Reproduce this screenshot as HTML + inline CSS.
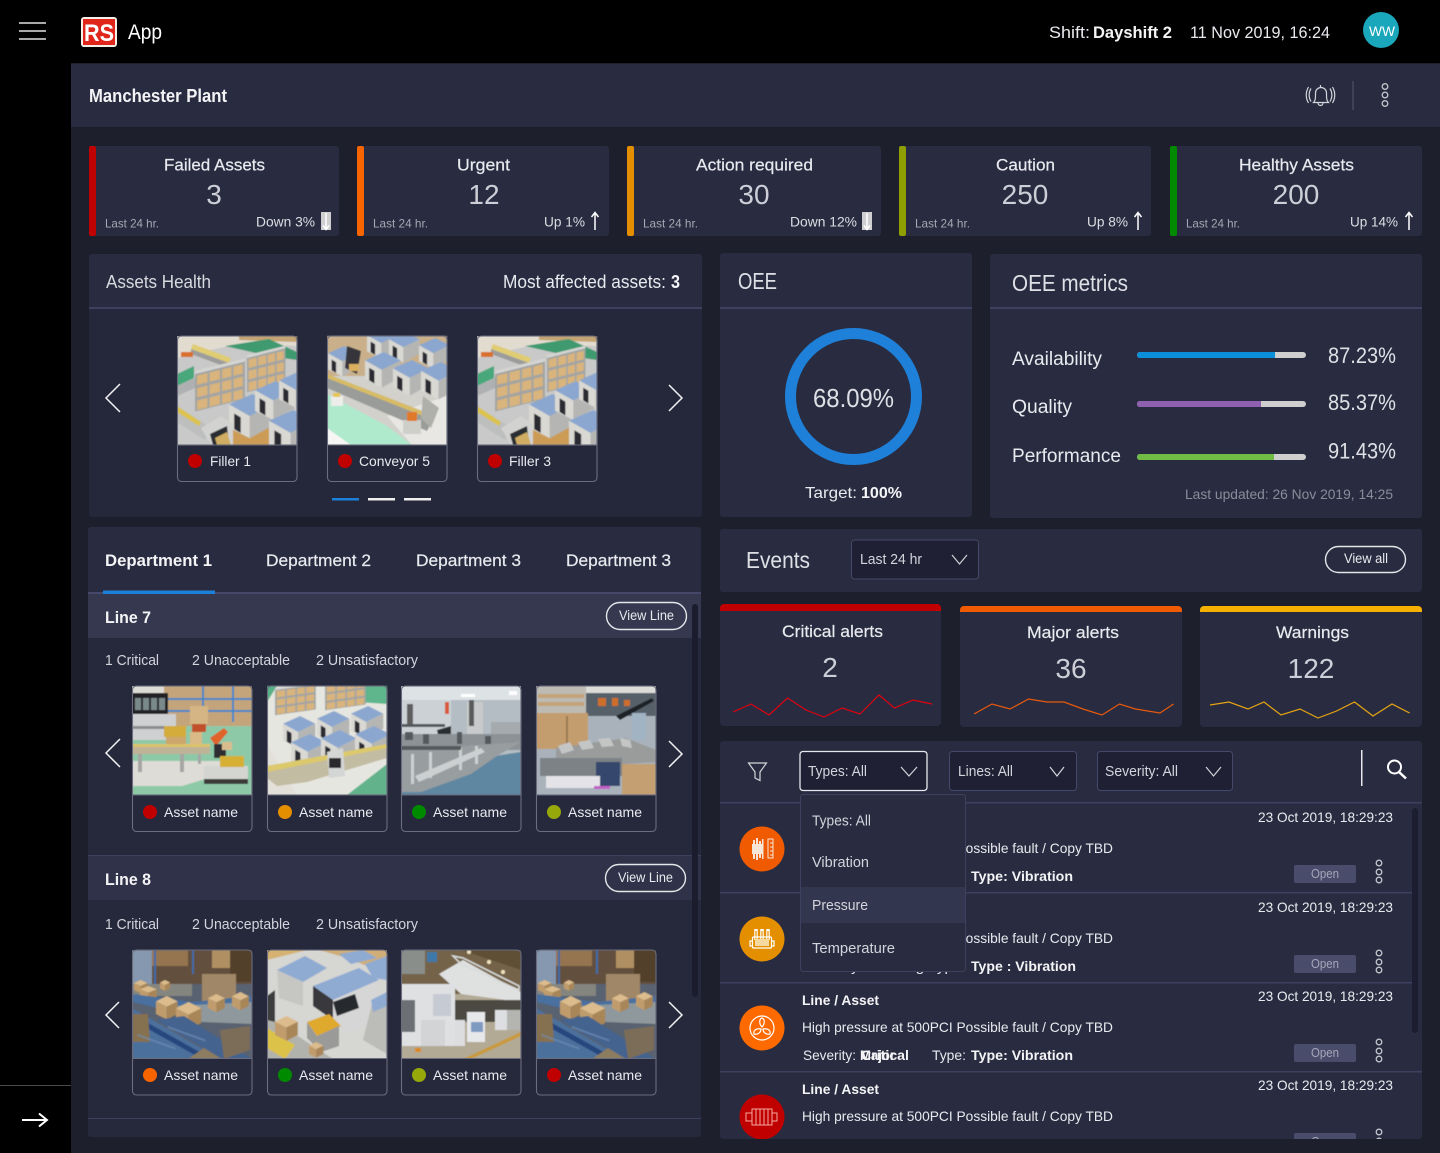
<!DOCTYPE html>
<html lang="en"><head><meta charset="utf-8"><title>Manchester Plant</title>
<style>
html,body{margin:0;padding:0;background:#000;width:1440px;height:1153px;overflow:hidden}
svg.p{display:block;position:absolute;left:0;top:0}
text{font-family:"Liberation Sans",sans-serif;fill:#e9eaef}
.b{font-weight:700;fill:#f4f4f6}
.n{font-size:28px;text-anchor:middle;fill:#cdced7}
.t{font-size:17px;stroke:#e9eaef;stroke-width:.2px}.s{font-size:14px}.m{font-size:14.5px;fill:#d3d4dc}
.l{font-size:12px;fill:#a5a7b2}.h{font-size:23px;fill:#dfe0e6}.a{font-size:14px;fill:#dcdde3}
.cb{fill:none;stroke:#6b6d7e;stroke-width:1.1}
.ch{fill:none;stroke:#f2f2f2;stroke-width:1.5}
.v{fill:none;stroke:#d4d5da;stroke-width:1.2}
.dv{fill:none;stroke:#c4c5cc;stroke-width:1.3}
.ln{fill:#3e4060}.c{fill:#292c40}
.ic{fill:none;stroke:#fff;stroke-width:1.2}
.i{filter:url(#sf)}
</style></head><body>
<svg class="p" width="1440" height="1153" viewBox="0 0 1440 1153" xmlns="http://www.w3.org/2000/svg">
<defs>
<filter id="sf" x="0" y="0" width="100%" height="100%"><feGaussianBlur stdDeviation=".45"/></filter>
<g id="mc"><polygon points="0,8 18,0 34,8 16,17" fill="#8ba7cf"/><polygon points="0,8 16,17 16,34 0,26" fill="#d9d8d3"/><polygon points="16,17 34,8 34,24 16,34" fill="#b5b6b4"/><polygon points="4,15 9,18 9,30 4,27" fill="#2c2c30"/></g>
<g id="sh"><rect width="48" height="36" fill="#a3a4a3"/><g fill="#d9b47c"><rect x="2" y="2" width="10" height="9"/><rect x="14" y="2" width="10" height="9"/><rect x="26" y="2" width="9" height="9"/><rect x="37" y="2" width="9" height="9"/><rect x="2" y="14" width="10" height="9"/><rect x="14" y="14" width="10" height="9"/><rect x="26" y="14" width="9" height="9"/><rect x="37" y="14" width="9" height="9"/><rect x="2" y="26" width="10" height="9"/><rect x="14" y="26" width="10" height="9"/><rect x="26" y="26" width="9" height="9"/><rect x="37" y="26" width="9" height="9"/></g><rect y="-3" width="48" height="3" fill="#d4d4d2"/></g>
<g id="bx"><polygon points="0,6 12,0 24,6 12,12" fill="#dcbc8c"/><polygon points="0,6 12,12 12,26 0,20" fill="#c09c6c"/><polygon points="12,12 24,6 24,20 12,26" fill="#a88658"/></g>
<symbol id="A" viewBox="0 0 120 109"><rect width="120" height="109" fill="#c8c9c8"/><polygon points="0,0 120,0 120,10 60,8 0,22" fill="#e2dcd0"/><polygon points="62,0 120,0 120,6 62,4" fill="#c5a473"/><polygon points="48,10 92,3 120,16 120,24 92,20" fill="#3f9a70"/><polygon points="16,8 54,22 52,27 14,13" fill="#e0cc72"/><polygon points="14,13 52,27 52,32 14,18" fill="#9c9d9b"/><rect x="4" y="16" width="12" height="5" fill="#d8702e"/><polygon points="0,38 17,30 17,42 0,50" fill="#4aa77c"/><polygon points="0,50 18,42 18,52 0,60" fill="#aeb0b2"/><g transform="translate(18,38) skewY(-14) scale(1.04)"><use href="#sh"/></g><g transform="translate(70,22) skewY(-14) scale(.8,.95)"><use href="#sh"/></g><polygon points="40,92 72,76 112,102 100,109 56,109" fill="#cc9b55"/><g transform="translate(52,58) scale(1.3)"><use href="#mc"/></g><g transform="translate(78,45) scale(1.15)"><use href="#mc"/></g><g transform="translate(102,36) scale(1.05)"><use href="#mc"/></g><g transform="translate(92,74) scale(1.35)"><use href="#mc"/></g><polygon points="0,70 34,92 28,104 0,86" fill="#bdbebe"/><polygon points="0,70 24,86 22,90 0,76" fill="#dcc34e"/><polygon points="24,92 44,80 56,88 56,109 34,109" fill="#d2d2d0"/><polygon points="33,98 50,90 52,109 36,109" fill="#2c2d30"/><polygon points="38,102 50,96 54,109 40,109" fill="#d0ad64"/></symbol>
<symbol id="B" viewBox="0 0 120 109"><rect width="120" height="109" fill="#d2d1cc"/><rect width="120" height="40" fill="#c9b08a"/><polygon points="0,58 60,90 85,109 20,109 0,95" fill="#aeeacb"/><polygon points="0,92 24,109 0,109" fill="#f6f6f4"/><polygon points="60,80 120,60 120,109 85,109" fill="#e8e7e3"/><g transform="translate(1,10) scale(.9)"><use href="#mc"/></g><g transform="translate(40,-8) scale(.9)"><use href="#mc"/></g><g transform="translate(62,-4) scale(.9)"><use href="#mc"/></g><g transform="translate(92,2) scale(.9)"><use href="#mc"/></g><g transform="translate(38,16) scale(1.05)"><use href="#mc"/></g><g transform="translate(66,24) scale(1.05)"><use href="#mc"/></g><g transform="translate(94,26) scale(1.1)"><use href="#mc"/></g><polygon points="20,10 34,15 30,38 18,32" fill="#35353a"/><rect x="22" y="28" width="10" height="7" fill="#d9b060"/><polygon points="0,38 108,80 100,95 0,52" fill="#9a9c99"/><polygon points="0,38 108,80 106,84 0,42" fill="#d8bc65"/><polygon points="96,60 112,72 104,92 94,82" fill="#b0b0ab"/><rect x="76" y="84" width="18" height="14" fill="#cfcfca"/><rect x="80" y="76" width="10" height="9" fill="#e07a2a"/><rect x="4" y="60" width="12" height="10" fill="#ededeb"/><rect x="6" y="57" width="7" height="4" fill="#e6c652"/></symbol>
<symbol id="C" viewBox="0 0 120 109"><rect width="120" height="109" fill="#8ec9a7"/><rect width="120" height="16" fill="#dedcd6"/><rect x="32" width="88" height="40" fill="#c4a47a"/><g fill="#3f86c8"><rect x="32" y="12" width="88" height="2"/><rect x="32" y="24" width="88" height="2"/><rect x="70" width="2" height="34"/><rect x="100" width="2" height="36"/></g><polygon points="0,75 90,75 90,88 50,100 0,100" fill="#dedcd6"/><rect x="0" y="7" width="36" height="21" fill="#222327"/><g fill="#7a8a8a"><rect x="3" y="12" width="6" height="12"/><rect x="11" y="12" width="6" height="12"/><rect x="19" y="12" width="6" height="12"/><rect x="27" y="12" width="6" height="12"/></g><rect x="0" y="28" width="44" height="26" fill="#cfd0d2"/><rect x="0" y="40" width="44" height="3" fill="#8c8c8c"/><rect x="34" y="42" width="20" height="16" fill="#cca66c"/><rect x="32" y="40" width="22" height="11" fill="#d4ac3a"/><rect x="58" y="46" width="12" height="14" fill="#d9b985"/><rect x="58" y="20" width="18" height="18" fill="#d6b585"/><rect x="60" y="38" width="14" height="8" fill="#c0502a"/><rect x="0" y="58" width="78" height="10" fill="#bfb397"/><rect x="0" y="58" width="78" height="3" fill="#dcc36a"/><g fill="#a5a6a4"><rect x="6" y="68" width="4" height="18"/><rect x="48" y="68" width="4" height="18"/><rect x="66" y="68" width="3" height="10"/></g><polygon points="78,52 92,42 96,46 84,60" fill="#e0632a"/><rect x="82" y="58" width="12" height="14" fill="#2d2d30"/><rect x="90" y="56" width="10" height="8" fill="#d9bd8f"/><polygon points="72,80 116,80 116,96 72,98" fill="#d4d4d0"/><rect x="88" y="70" width="24" height="11" fill="#d6b034"/><rect x="72" y="93" width="44" height="5" fill="#3a3a38"/></symbol>
<symbol id="D" viewBox="0 0 120 109"><rect width="120" height="109" fill="#e6e6e0"/><polygon points="0,0 10,0 0,16" fill="#59b186"/><polygon points="60,0 120,0 120,18 90,16" fill="#5fb58c"/><polygon points="80,109 120,78 120,109" fill="#62b38c"/><polygon points="0,58 0,109 30,109" fill="#e2e0d9"/><g transform="translate(8,4) skewY(-8) scale(.85,.7)"><use href="#sh"/></g><g transform="translate(58,-1) skewY(-8) scale(.85,.7)"><use href="#sh"/></g><g transform="translate(16,30) scale(.95)"><use href="#mc"/></g><g transform="translate(50,25) scale(.95)"><use href="#mc"/></g><g transform="translate(84,20) scale(.95)"><use href="#mc"/></g><g transform="translate(24,48) scale(1.05)"><use href="#mc"/></g><g transform="translate(54,44) scale(1.05)"><use href="#mc"/></g><g transform="translate(88,40) scale(1.05)"><use href="#mc"/></g><polygon points="0,80 120,58 120,72 40,96 10,100 0,92" fill="#c2bca2"/><polygon points="0,80 120,58 120,62 0,86" fill="#dcc96c"/><polygon points="60,66 76,62 78,90 62,92" fill="#d4d5d5"/><rect x="62" y="72" width="12" height="10" fill="#2a2a2e"/></symbol>
<symbol id="E" viewBox="0 0 120 109"><rect width="120" height="109" fill="#b4bdc3"/><rect width="120" height="14" fill="#dde2e5"/><rect x="60" y="8" width="14" height="3" fill="#fff"/><rect x="108" y="5" width="8" height="4" fill="#fff"/><rect x="0" y="14" width="50" height="40" fill="#ccd1d5"/><rect x="6" y="18" width="6" height="22" fill="#5f5f60"/><rect x="44" y="16" width="4" height="12" fill="#d85a3a"/><rect x="0" y="38" width="44" height="3" fill="#55585a"/><polygon points="36,44 50,40 50,52 44,62 38,54" fill="#2b2d30"/><rect x="66" y="16" width="16" height="36" fill="#c8cacb"/><rect x="68" y="14" width="5" height="26" fill="#585a5c"/><rect x="90" y="36" width="30" height="22" fill="#a4aaae"/><rect x="0" y="48" width="120" height="16" fill="#8c9296"/><g fill="#55585c"><rect x="4" y="46" width="8" height="8"/><rect x="22" y="48" width="6" height="10"/><rect x="56" y="46" width="5" height="12"/><rect x="84" y="50" width="6" height="8"/></g><polygon points="0,109 0,84 120,66 120,109" fill="#5f87a2"/><polygon points="0,64 120,56 96,70 70,88 20,106 0,106" fill="#989da0"/><g fill="#cdd0d1"><rect x="10" y="68" width="3" height="30"/><rect x="28" y="66" width="3" height="26"/><rect x="58" y="62" width="3" height="22"/><rect x="74" y="60" width="3" height="18"/><polygon points="14,90 80,62 84,66 18,96"/></g><rect x="0" y="60" width="60" height="4" fill="#565a5c"/></symbol>
<symbol id="F" viewBox="0 0 120 109"><rect width="120" height="109" fill="#a9b2bb"/><rect width="120" height="30" fill="#566169"/><rect x="0" y="0" width="50" height="27" fill="#bdbbb4"/><g fill="#c4a27a"><rect x="2" y="16" width="46" height="4"/><rect x="2" y="8" width="46" height="4"/></g><rect x="50" y="0" width="70" height="7" fill="#dcdcd8"/><g fill="#cf6e2c"><rect x="62" y="12" width="8" height="8"/><rect x="76" y="12" width="6" height="8"/><rect x="88" y="14" width="6" height="6"/></g><rect x="0" y="27" width="52" height="36" fill="#c49d6e"/><rect x="30" y="30" width="2" height="33" fill="#9a7a50"/><polygon points="80,30 116,12 118,15 84,34" fill="#1e2026"/><rect x="96" y="27" width="14" height="27" fill="#a0b4c4"/><polygon points="20,62 90,52 120,64 120,76 56,80 20,76" fill="#9a9c9c"/><g fill="#c4c6c6"><polygon points="22,60 34,56 38,64 26,68"/><polygon points="42,56 54,54 58,62 46,64"/><polygon points="62,53 74,52 78,60 66,61"/><polygon points="84,52 94,54 96,62 86,60"/></g><rect x="4" y="72" width="82" height="18" fill="#7c8286"/><rect x="60" y="76" width="24" height="24" fill="#34466c"/><rect x="86" y="78" width="34" height="31" fill="#c49f72"/><rect x="10" y="90" width="54" height="12" fill="#e4e4e8"/><rect x="58" y="100" width="16" height="3" fill="#c060c8"/></symbol>
<symbol id="G" viewBox="0 0 120 109"><rect width="120" height="109" fill="#58626f"/><rect width="120" height="34" fill="#63503e"/><rect x="20" y="0" width="36" height="16" fill="#94754f"/><rect x="80" y="0" width="18" height="18" fill="#b09062"/><rect x="98" y="0" width="22" height="32" fill="#523f2c"/><g fill="#3e6aa8"><rect x="22" y="0" width="2" height="36"/><rect x="60" y="0" width="2" height="24"/></g><rect x="70" y="24" width="34" height="30" fill="#a08768"/><rect x="0" y="0" width="20" height="34" fill="#8598b0"/><rect x="0" y="34" width="60" height="12" fill="#85857f"/><g transform="translate(2,30) scale(.55,.5)"><use href="#bx"/></g><g transform="translate(28,30) scale(.42)"><use href="#bx"/></g><g transform="translate(8,36) scale(.7,.55)"><use href="#bx"/></g><polygon points="0,44 60,52 120,46 120,62 60,66 0,52" fill="#49709f"/><polygon points="40,56 120,52 120,74 70,72" fill="#8f989c"/><g transform="translate(76,44) scale(.7)"><use href="#bx"/></g><g transform="translate(100,42) scale(.7)"><use href="#bx"/></g><g transform="translate(24,46) scale(.9)"><use href="#bx"/></g><g transform="translate(44,52) scale(1.05)"><use href="#bx"/></g><polygon points="0,58 88,109 0,109" fill="#4c6f9c"/><polygon points="24,70 90,109 120,109 52,66" fill="#45638f"/><polygon points="0,64 80,109 70,109 0,70" fill="#27467e"/><polygon points="0,64 16,64 18,92 0,92" fill="#85704f"/><polygon points="88,80 118,76 118,100 92,109" fill="#7c6d58"/><polygon points="56,109 72,98 90,109" fill="#8c7b60"/><g fill="#7090b8" opacity=".6"><rect x="6" y="84" width="40" height="2" transform="rotate(20 6 84)"/><rect x="36" y="76" width="40" height="2" transform="rotate(20 36 76)"/></g></symbol>
<symbol id="H" viewBox="0 0 120 109"><rect width="120" height="109" fill="#d6d6d2"/><polygon points="0,0 40,0 0,10" fill="#d6b272"/><polygon points="52,0 120,0 120,24 80,8" fill="#d0ae78"/><polygon points="10,20 38,6 60,18 36,32" fill="#8fabd2"/><polygon points="10,20 36,32 36,56 12,48" fill="#c6c6c3"/><polygon points="72,4 96,0 110,8 84,14" fill="#8fabd2"/><polygon points="98,14 120,6 120,30 106,28" fill="#8fabd2"/><polygon points="46,36 92,18 112,30 66,50" fill="#8fabd2"/><polygon points="46,36 66,50 66,70 46,56" fill="#38383c"/><polygon points="66,50 112,30 108,70 84,84 66,74" fill="#d6d6d6"/><polygon points="66,52 88,44 92,58 70,66" fill="#28292d"/><polygon points="106,50 120,42 120,104 96,90" fill="#bcbcb8"/><polygon points="104,50 120,42 120,56 106,62" fill="#8fabd2"/><polygon points="40,72 62,64 74,76 50,86" fill="#dfa92e"/><polygon points="40,72 50,86 72,76 72,96 54,102 40,88" fill="#9a9a98"/><polygon points="0,66 66,109 0,109" fill="#b2b2ac"/><polygon points="0,78 28,95 18,109 0,98" fill="#dcc24a"/><g transform="translate(8,66) scale(.95)"><use href="#bx"/></g><g transform="translate(42,92) scale(.6)"><use href="#bx"/></g><polygon points="0,46 8,40 8,72 0,70" fill="#3e3e40"/></symbol>
<symbol id="I" viewBox="0 0 120 109"><rect width="120" height="109" fill="#b3aa95"/><rect width="120" height="44" fill="#75644a"/><polygon points="0,0 120,0 120,20 60,0" fill="#5e4f35"/><g fill="#f0e4c0"><circle cx="68" cy="2" r="2"/><circle cx="88" cy="12" r="2"/><circle cx="102" cy="22" r="2"/></g><rect x="0" y="0" width="24" height="24" fill="#8a8e8a"/><rect x="26" y="2" width="10" height="10" fill="#3e78a8"/><polygon points="38,24 62,10 120,42 120,52 60,44" fill="#dfe0e0"/><polygon points="52,6 62,8 118,36 118,40 60,14" fill="none" stroke="#d9dcdc" stroke-width="1.5"/><rect x="0" y="34" width="54" height="62" fill="#dfe0e2"/><rect x="0" y="50" width="14" height="32" fill="#6c7074"/><rect x="32" y="44" width="18" height="22" fill="#c6cad3"/><rect x="20" y="70" width="24" height="26" fill="#d2d4d6"/><rect x="54" y="50" width="66" height="22" fill="#4c4a42"/><rect x="54" y="70" width="10" height="26" fill="#dcddde"/><rect x="66" y="62" width="18" height="30" fill="#e6e8ea"/><rect x="70" y="72" width="12" height="10" fill="#7f9ac0"/><rect x="94" y="60" width="12" height="20" fill="#dcdee1"/><rect x="106" y="60" width="14" height="20" fill="#b4b5b1"/><polygon points="62,109 120,82 120,86 70,109" fill="#c99a3e"/><rect x="14" y="98" width="6" height="4" fill="#d98a20"/></symbol>
<clipPath id="evc"><rect x="720" y="803" width="702" height="336"/></clipPath>
</defs>

<!-- Shell -->
<rect x="0" y="0" width="1440" height="1153" fill="#000"/>
<rect x="71" y="63" width="1369" height="1090" fill="#1e1f2d"/>
<g fill="#a9a9a9"><rect x="19" y="22" width="27" height="2"/><rect x="19" y="30" width="27" height="2"/><rect x="19" y="38" width="27" height="2"/></g>
<rect x="81" y="17" width="36" height="30" rx="3" fill="#f3efe9"/>
<rect x="83" y="19" width="32" height="26" fill="#e0251b"/>
<text x="84" y="41" font-size="24" font-weight="700" textLength="30" lengthAdjust="spacingAndGlyphs" style="fill:#fff">RS</text>
<text x="128" y="39" font-size="21" textLength="34" lengthAdjust="spacingAndGlyphs" style="fill:#fff">App</text>
<rect x="0" y="1085" width="71" height="1" fill="#4a4a4a"/>
<path d="M22 1120H47M39 1113.500L47 1120L39 1126.500" fill="none" stroke="#fff" stroke-width="2"/>
<text x="1049" y="38" font-size="17" textLength="41" lengthAdjust="spacingAndGlyphs">Shift:</text>
<text x="1093" y="38" font-size="17" class="b" textLength="79" lengthAdjust="spacingAndGlyphs">Dayshift 2</text>
<text x="1190" y="38" font-size="17" textLength="140" lengthAdjust="spacingAndGlyphs">11 Nov 2019, 16:24</text>
<circle cx="1381" cy="30" r="18" fill="#1aa6bb"/>
<text x="1369" y="36" font-size="14" textLength="26" lengthAdjust="spacingAndGlyphs" style="fill:#fff">WW</text>

<!-- Plant header -->
<rect x="71" y="64" width="1369" height="63" class="c"/>
<text x="89" y="102" font-size="18" class="b" textLength="138" lengthAdjust="spacingAndGlyphs">Manchester Plant</text>
<g class="v"><path d="M1313.500 102.500c2-2 2-4 2-9.500a5.500 5.500 0 0 1 11 0c0 5.500 0 7.500 2 9.500zM1318 103a2.500 2.500 0 0 0 5 0M1320.500 87v-2M1311 88.500c-2.500 4-2.500 9 0 13M1308.500 87c-3 5-3 11 0 16M1330 88.500c2.500 4 2.500 9 0 13M1332.500 87c3 5 3 11 0 16"/></g>
<rect x="1352.500" y="81" width="1" height="29" fill="#55576e"/>
<g class="dv"><circle cx="1385" cy="86.500" r="2.800"/><circle cx="1385" cy="95" r="2.800"/><circle cx="1385" cy="103.500" r="2.800"/></g>

<!-- KPI cards -->
<g class="c"><rect x="89" y="146" width="250" height="90" rx="3"/><rect x="357" y="146" width="252" height="90" rx="3"/><rect x="627" y="146" width="254" height="90" rx="3"/><rect x="899" y="146" width="252" height="90" rx="3"/><rect x="1170" y="146" width="252" height="90" rx="3"/></g>
<rect x="89" y="146" width="7" height="90" rx="2" fill="#bf0000"/><rect x="357" y="146" width="7" height="90" rx="2" fill="#f76400"/><rect x="627" y="146" width="7" height="90" rx="2" fill="#e48f00"/><rect x="899" y="146" width="7" height="90" rx="2" fill="#8f9e00"/><rect x="1170" y="146" width="7" height="90" rx="2" fill="#008a00"/>
<text x="164" y="170.500" class="t" textLength="101" lengthAdjust="spacingAndGlyphs">Failed Assets</text>
<text x="457" y="170.500" class="t" textLength="53" lengthAdjust="spacingAndGlyphs">Urgent</text>
<text x="696" y="170.500" class="t" textLength="117" lengthAdjust="spacingAndGlyphs">Action required</text>
<text x="996" y="170.500" class="t" textLength="59" lengthAdjust="spacingAndGlyphs">Caution</text>
<text x="1239" y="170.500" class="t" textLength="115" lengthAdjust="spacingAndGlyphs">Healthy Assets</text>
<text x="214" y="204" class="n">3</text><text x="484" y="204" class="n">12</text><text x="754" y="204" class="n">30</text><text x="1025" y="204" class="n">250</text><text x="1296" y="204" class="n">200</text>
<text x="105" y="227.500" class="l" textLength="54" lengthAdjust="spacingAndGlyphs">Last 24 hr.</text>
<text x="373" y="227.500" class="l" textLength="55" lengthAdjust="spacingAndGlyphs">Last 24 hr.</text>
<text x="643" y="227.500" class="l" textLength="55" lengthAdjust="spacingAndGlyphs">Last 24 hr.</text>
<text x="915" y="227.500" class="l" textLength="55" lengthAdjust="spacingAndGlyphs">Last 24 hr.</text>
<text x="1186" y="227.500" class="l" textLength="54" lengthAdjust="spacingAndGlyphs">Last 24 hr.</text>
<text x="256" y="226.500" class="a" textLength="59" lengthAdjust="spacingAndGlyphs">Down 3%</text>
<text x="544" y="226.500" class="a" textLength="41" lengthAdjust="spacingAndGlyphs">Up 1%</text>
<text x="790" y="226.500" class="a" textLength="67" lengthAdjust="spacingAndGlyphs">Down 12%</text>
<text x="1087" y="226.500" class="a" textLength="41" lengthAdjust="spacingAndGlyphs">Up 8%</text>
<text x="1350" y="226.500" class="a" textLength="48" lengthAdjust="spacingAndGlyphs">Up 14%</text>
<rect x="321" y="212" width="10" height="18" fill="#cfcfd2"/><path d="M326 213V229M323 225.500L326 229.500L329 225.500" fill="none" stroke="#fff" stroke-width="1.500"/>
<rect x="862" y="212" width="10" height="18" fill="#cfcfd2"/><path d="M867 213V229M864 225.500L867 229.500L870 225.500" fill="none" stroke="#fff" stroke-width="1.500"/>
<g fill="none" stroke="#fff" stroke-width="1.500"><path d="M595 230V213M591.500 217L595 212.500L598.500 217"/><path d="M1138 230V213M1134.500 217L1138 212.500L1141.500 217"/><path d="M1409 230V213M1405.500 217L1409 212.500L1412.500 217"/></g>

<!-- Assets health -->
<rect x="89" y="254" width="613" height="263" rx="3" fill="#25273b"/>
<rect x="89" y="254" width="613" height="54" rx="3" class="c"/>
<rect x="89" y="307" width="613" height="2" class="ln"/>
<text x="106" y="288" font-size="18" textLength="105" lengthAdjust="spacingAndGlyphs" style="fill:#d8d9df">Assets Health</text>
<text x="503" y="288" font-size="18" textLength="163" lengthAdjust="spacingAndGlyphs">Most affected assets:</text>
<text x="671" y="288" font-size="18" class="b" textLength="9" lengthAdjust="spacingAndGlyphs">3</text>
<path class="ch" d="M120 384L106 398L120 412M669 385L682 398L669 411"/>
<use class="i" href="#A" x="177" y="336" width="120" height="109"/><rect x="177.500" y="336" width="119.500" height="145.500" rx="4" class="cb"/><path d="M177 445H297" stroke="#6b6d7e"/>
<circle cx="195" cy="461" r="7" fill="#c00000"/><text x="210" y="466" class="s" textLength="41" lengthAdjust="spacingAndGlyphs">Filler 1</text>
<use class="i" href="#B" x="327" y="336" width="120" height="109"/><rect x="327.500" y="336" width="119.500" height="145.500" rx="4" class="cb"/><path d="M327 445H447" stroke="#6b6d7e"/>
<circle cx="345" cy="461" r="7" fill="#c00000"/><text x="359" y="466" class="s" textLength="71" lengthAdjust="spacingAndGlyphs">Conveyor 5</text>
<use class="i" href="#A" x="477" y="336" width="120" height="109"/><rect x="477.500" y="336" width="119.500" height="145.500" rx="4" class="cb"/><path d="M477 445H597" stroke="#6b6d7e"/>
<circle cx="495" cy="461" r="7" fill="#c00000"/><text x="509" y="466" class="s" textLength="42" lengthAdjust="spacingAndGlyphs">Filler 3</text>
<rect x="332" y="498" width="27" height="2.500" fill="#1d80d8"/><rect x="368" y="498" width="27" height="2.500" fill="#eee"/><rect x="404" y="498" width="27" height="2.500" fill="#eee"/>

<!-- OEE -->
<rect x="720" y="253" width="252" height="264" rx="3" class="c"/>
<rect x="720" y="307" width="252" height="2" class="ln"/>
<text x="738" y="289" class="h" textLength="39" lengthAdjust="spacingAndGlyphs">OEE</text>
<circle cx="853.500" cy="396.500" r="63" fill="none" stroke="#1e80d8" stroke-width="11"/>
<text x="813" y="407" font-size="26" textLength="81" lengthAdjust="spacingAndGlyphs" style="fill:#dfe0e6">68.09%</text>
<text x="805" y="498" font-size="16" textLength="52" lengthAdjust="spacingAndGlyphs">Target:</text>
<text x="861" y="498" font-size="16" class="b" textLength="41" lengthAdjust="spacingAndGlyphs">100%</text>

<!-- OEE metrics -->
<rect x="990" y="254" width="432" height="264" rx="3" class="c"/>
<rect x="990" y="307" width="432" height="2" class="ln"/>
<text x="1012" y="291" class="h" textLength="116" lengthAdjust="spacingAndGlyphs">OEE metrics</text>
<text x="1012" y="365" font-size="19" textLength="90" lengthAdjust="spacingAndGlyphs">Availability</text>
<text x="1012" y="413" font-size="19" textLength="60" lengthAdjust="spacingAndGlyphs">Quality</text>
<text x="1012" y="462" font-size="19" textLength="109" lengthAdjust="spacingAndGlyphs">Performance</text>
<rect x="1137" y="352" width="169" height="6" rx="3" fill="#cfcfcf"/><path d="M1140 352H1275V358H1140A3 3 0 0 1 1140 352Z" fill="#0a8fd8"/>
<rect x="1137" y="401" width="169" height="6" rx="3" fill="#cfcfcf"/><path d="M1140 401H1261V407H1140A3 3 0 0 1 1140 401Z" fill="#9060b0"/>
<rect x="1137" y="454" width="169" height="6" rx="3" fill="#cfcfcf"/><path d="M1140 454H1274V460H1140A3 3 0 0 1 1140 454Z" fill="#70bc45"/>
<text x="1328" y="363" font-size="22" textLength="68" lengthAdjust="spacingAndGlyphs" style="fill:#dfe0e6">87.23%</text>
<text x="1328" y="410" font-size="22" textLength="68" lengthAdjust="spacingAndGlyphs" style="fill:#dfe0e6">85.37%</text>
<text x="1328" y="458.500" font-size="22" textLength="68" lengthAdjust="spacingAndGlyphs" style="fill:#dfe0e6">91.43%</text>
<text x="1185" y="499" font-size="14" textLength="208" lengthAdjust="spacingAndGlyphs" style="fill:#8a8c9a">Last updated: 26 Nov 2019, 14:25</text>

<!-- Departments -->
<rect x="88" y="527" width="613" height="610" rx="3" fill="#26283c"/>
<rect x="88" y="527" width="613" height="65" rx="3" class="c"/>
<text x="105" y="566" class="t b" textLength="107" lengthAdjust="spacingAndGlyphs" style="stroke:none">Department 1</text>
<text x="266" y="566" class="t" textLength="105" lengthAdjust="spacingAndGlyphs">Department 2</text>
<text x="416" y="566" class="t" textLength="105" lengthAdjust="spacingAndGlyphs">Department 3</text>
<text x="566" y="566" class="t" textLength="105" lengthAdjust="spacingAndGlyphs">Department 3</text>
<rect x="88" y="592" width="613" height="2" fill="#45486a"/>
<rect x="103" y="590.500" width="112" height="4.500" fill="#1d80d8"/>
<rect x="88" y="594" width="613" height="44" fill="#35384f"/>
<text x="105" y="623" class="t b" textLength="46" lengthAdjust="spacingAndGlyphs" style="stroke:none">Line 7</text>
<rect x="606.500" y="602.500" width="80" height="27" rx="13.500" fill="none" stroke="#e5e6ea" stroke-width="1.400"/>
<text x="619" y="620" class="s" textLength="55" lengthAdjust="spacingAndGlyphs">View Line</text>
<text x="105" y="665" class="m" textLength="54" lengthAdjust="spacingAndGlyphs">1 Critical</text>
<text x="192" y="665" class="m" textLength="98" lengthAdjust="spacingAndGlyphs">2 Unacceptable</text>
<text x="316" y="665" class="m" textLength="102" lengthAdjust="spacingAndGlyphs">2 Unsatisfactory</text>
<path class="ch" d="M120 739L106 753L120 767M669 741L682 754L669 767"/>
<use class="i" href="#C" x="132" y="686" width="120" height="109"/><rect x="132.500" y="686" width="119.500" height="145.500" rx="4" class="cb"/><path d="M132 795H252" stroke="#6b6d7e"/>
<circle cx="150" cy="812" r="7" fill="#c00000"/><text x="164" y="817" class="s" textLength="74" lengthAdjust="spacingAndGlyphs">Asset name</text>
<use class="i" href="#D" x="267" y="686" width="120" height="109"/><rect x="267.500" y="686" width="119.500" height="145.500" rx="4" class="cb"/><path d="M267 795H387" stroke="#6b6d7e"/>
<circle cx="285" cy="812" r="7" fill="#e48f00"/><text x="299" y="817" class="s" textLength="74" lengthAdjust="spacingAndGlyphs">Asset name</text>
<use class="i" href="#E" x="401" y="686" width="120" height="109"/><rect x="401.500" y="686" width="119.500" height="145.500" rx="4" class="cb"/><path d="M401 795H521" stroke="#6b6d7e"/>
<circle cx="419" cy="812" r="7" fill="#008a00"/><text x="433" y="817" class="s" textLength="74" lengthAdjust="spacingAndGlyphs">Asset name</text>
<use class="i" href="#F" x="536" y="686" width="120" height="109"/><rect x="536.500" y="686" width="119.500" height="145.500" rx="4" class="cb"/><path d="M536 795H656" stroke="#6b6d7e"/>
<circle cx="554" cy="812" r="7" fill="#97a80a"/><text x="568" y="817" class="s" textLength="74" lengthAdjust="spacingAndGlyphs">Asset name</text>
<rect x="88" y="855" width="613" height="1" class="ln"/>
<rect x="88" y="856" width="613" height="44" fill="#2f3248"/>
<text x="105" y="885" class="t b" textLength="46" lengthAdjust="spacingAndGlyphs" style="stroke:none">Line 8</text>
<rect x="605.500" y="864.500" width="80" height="27" rx="13.500" fill="none" stroke="#e5e6ea" stroke-width="1.400"/>
<text x="618" y="882" class="s" textLength="55" lengthAdjust="spacingAndGlyphs">View Line</text>
<text x="105" y="929" class="m" textLength="54" lengthAdjust="spacingAndGlyphs">1 Critical</text>
<text x="192" y="929" class="m" textLength="98" lengthAdjust="spacingAndGlyphs">2 Unacceptable</text>
<text x="316" y="929" class="m" textLength="102" lengthAdjust="spacingAndGlyphs">2 Unsatisfactory</text>
<path class="ch" d="M119 1002L106 1015L119 1028M669 1002L682 1015L669 1028"/>
<use class="i" href="#G" x="132" y="950" width="120" height="109"/><rect x="132.500" y="950" width="119.500" height="145" rx="4" class="cb"/><path d="M132 1058.500H252" stroke="#6b6d7e"/>
<circle cx="150" cy="1075" r="7" fill="#f76400"/><text x="164" y="1080" class="s" textLength="74" lengthAdjust="spacingAndGlyphs">Asset name</text>
<use class="i" href="#H" x="267" y="950" width="120" height="109"/><rect x="267.500" y="950" width="119.500" height="145" rx="4" class="cb"/><path d="M267 1058.500H387" stroke="#6b6d7e"/>
<circle cx="285" cy="1075" r="7" fill="#008a00"/><text x="299" y="1080" class="s" textLength="74" lengthAdjust="spacingAndGlyphs">Asset name</text>
<use class="i" href="#I" x="401" y="950" width="120" height="109"/><rect x="401.500" y="950" width="119.500" height="145" rx="4" class="cb"/><path d="M401 1058.500H521" stroke="#6b6d7e"/>
<circle cx="419" cy="1075" r="7" fill="#97a80a"/><text x="433" y="1080" class="s" textLength="74" lengthAdjust="spacingAndGlyphs">Asset name</text>
<use class="i" href="#G" x="536" y="950" width="120" height="109"/><rect x="536.500" y="950" width="119.500" height="145" rx="4" class="cb"/><path d="M536 1058.500H656" stroke="#6b6d7e"/>
<circle cx="554" cy="1075" r="7" fill="#c00000"/><text x="568" y="1080" class="s" textLength="74" lengthAdjust="spacingAndGlyphs">Asset name</text>
<rect x="88" y="1118" width="613" height="1" class="ln"/>
<rect x="692" y="604" width="6" height="393" rx="3" fill="#1b1c2e"/>

<!-- Events -->
<rect x="720" y="529" width="702" height="63" rx="3" class="c"/>
<text x="746" y="568" class="h" textLength="64" lengthAdjust="spacingAndGlyphs">Events</text>
<rect x="851.500" y="540" width="127" height="39" rx="3" fill="#1f2034" stroke="#45486a"/>
<text x="860" y="564" class="m" textLength="62" lengthAdjust="spacingAndGlyphs">Last 24 hr</text>
<path class="v" d="M952 555L959.500 564L967 555"/>
<rect x="1325.500" y="546.500" width="80" height="26" rx="13" fill="none" stroke="#e5e6ea" stroke-width="1.400"/>
<text x="1344" y="563" class="s" textLength="44" lengthAdjust="spacingAndGlyphs">View all</text>

<!-- Alerts -->
<rect x="720" y="604" width="221" height="122" rx="4" class="c"/><path d="M720 611V608a4 4 0 0 1 4-4H937a4 4 0 0 1 4 4V611Z" fill="#c00000"/>
<rect x="960" y="606" width="222" height="121" rx="4" class="c"/><path d="M960 612V610a4 4 0 0 1 4-4H1178a4 4 0 0 1 4 4V612Z" fill="#f05a00"/>
<rect x="1200" y="606" width="222" height="121" rx="4" class="c"/><path d="M1200 612V610a4 4 0 0 1 4-4H1418a4 4 0 0 1 4 4V612Z" fill="#f5b000"/>
<text x="782" y="637" class="t" textLength="101" lengthAdjust="spacingAndGlyphs">Critical alerts</text>
<text x="1027" y="638" class="t" textLength="92" lengthAdjust="spacingAndGlyphs">Major alerts</text>
<text x="1276" y="638" class="t" textLength="73" lengthAdjust="spacingAndGlyphs">Warnings</text>
<text x="830" y="677" class="n">2</text><text x="1071" y="678" class="n">36</text><text x="1311" y="678" class="n">122</text>
<polyline fill="none" stroke="#e00010" stroke-width="1.200" points="733,712 751,704 769,715 787.500,698 806,710 824,717 842,708 860,714 879,695 894.500,708 913,700 932,704"/>
<polyline fill="none" stroke="#e8590c" stroke-width="1.200" points="974,714 992,704 1010,709 1028.500,699 1047,702 1064,702 1083,709 1102,715 1119.500,704 1135.500,709 1160,713 1173.600,704"/>
<polyline fill="none" stroke="#e6a413" stroke-width="1.200" points="1210,705 1229,702 1248,709 1264,702 1281,715 1300,709 1318,718 1336.600,711 1354.500,702 1373,716 1392,704 1409.600,713"/>

<!-- Filters + event list -->
<rect x="720" y="741" width="702" height="398" rx="3" class="c"/>
<path d="M748.500 763H766.500L760 772V780.500L755 778V772Z" fill="none" stroke="#d4d5da" stroke-width="1.200"/>
<rect x="800" y="751.500" width="127" height="39" rx="3" fill="#1f2034" stroke="#e6e7ec" stroke-width="1.300"/>
<rect x="949.500" y="751.500" width="127" height="39" rx="3" fill="#1f2034" stroke="#45486a"/>
<rect x="1097.500" y="751.500" width="135" height="39" rx="3" fill="#1f2034" stroke="#45486a"/>
<text x="808" y="776" class="m" textLength="59" lengthAdjust="spacingAndGlyphs">Types: All</text>
<text x="958" y="776" class="m" textLength="55" lengthAdjust="spacingAndGlyphs">Lines: All</text>
<text x="1105" y="776" class="m" textLength="73" lengthAdjust="spacingAndGlyphs">Severity: All</text>
<path class="v" d="M901 767L909 776L917 767M1050 767L1057 776L1064 767M1206 767L1213.500 776L1221 767"/>
<rect x="1361" y="750" width="1.500" height="36" fill="#e8e8ec"/>
<circle cx="1394.500" cy="767" r="6.500" fill="none" stroke="#fff" stroke-width="2"/><path d="M1399 772L1406 778.500" stroke="#fff" stroke-width="2.500"/>
<g class="ln"><rect x="720" y="802" width="702" height="1.500"/><rect x="720" y="892" width="692" height="1.500"/><rect x="720" y="982" width="692" height="1.500"/><rect x="720" y="1071" width="702" height="1.500"/></g>
<rect x="1412" y="808" width="6" height="225" rx="3" fill="#1c1d30"/>
<g clip-path="url(#evc)">
<circle cx="762" cy="849" r="22.500" fill="#f05a00"/>
<g fill="#f7e6d8"><rect x="752" y="844" width="11" height="10"/><rect x="753" y="840" width="2" height="19"/><rect x="756" y="838" width="2" height="22"/><rect x="759" y="841" width="2" height="17"/><rect x="762" y="839" width="1.500" height="20"/></g>
<path d="M768 839V858H773V839ZM770 843H773M770 847H773M770 851H773M770 855H773" fill="none" stroke="#f7e6d8"/>
<circle cx="762" cy="939" r="22.500" fill="#e48f00"/>
<path d="M756 929V940M762 929V940M768 929V940" stroke="#fff" stroke-width="3.500" fill="none"/>
<path d="M756 931V939M762 931V939M768 931V939" stroke="#e48f00" stroke-width="1.200" fill="none"/>
<rect x="752.500" y="937" width="19" height="11" rx="1" class="ic" fill="#e48f00"/><rect x="755" y="939" width="14" height="7" fill="#f5d9a0"/><path d="M752 941h-2v5h2M772 941h2v5h-2" class="ic"/>
<circle cx="762" cy="1028" r="22.500" fill="#ff6a00"/>
<circle cx="762" cy="1028" r="12" class="ic"/>
<path class="ic" d="M762 1027c-3-3-3-8 0-9c3 1 3 6 0 9ZM763 1029c4-1 8 1 7 5c-3 1-7-1-7-5ZM761 1029c-4-1-8 1-7 5c3 1 7-1 7-5Z"/>
<circle cx="762" cy="1117" r="22.500" fill="#c00000"/>
<path d="M752 1109H772V1125H752ZM756 1109V1125M760 1109V1125M764 1109V1125M768 1109V1125M752 1113H746V1121H752M772 1113H777V1121H772" fill="none" stroke="#f3aaa0" stroke-width="1"/>

<g fill="#d6d7dd">
<text x="1258" y="822" class="s" textLength="135" lengthAdjust="spacingAndGlyphs">23 Oct 2019, 18:29:23</text>
<text x="1258" y="912" class="s" textLength="135" lengthAdjust="spacingAndGlyphs">23 Oct 2019, 18:29:23</text>
<text x="1258" y="1001" class="s" textLength="135" lengthAdjust="spacingAndGlyphs">23 Oct 2019, 18:29:23</text>
<text x="1258" y="1090" class="s" textLength="135" lengthAdjust="spacingAndGlyphs">23 Oct 2019, 18:29:23</text>
</g>
<text x="802" y="853" class="s" textLength="311" lengthAdjust="spacingAndGlyphs">High pressure at 500PCI Possible fault / Copy TBD</text>
<text x="802" y="943" class="s" textLength="311" lengthAdjust="spacingAndGlyphs">High pressure at 500PCI Possible fault / Copy TBD</text>
<text x="971" y="881" class="s b" textLength="102" lengthAdjust="spacingAndGlyphs">Type: Vibration</text>
<text x="803" y="971" class="s" textLength="163" lengthAdjust="spacingAndGlyphs">Severity: Warning  Type:</text>
<text x="971" y="971" class="s b" textLength="105" lengthAdjust="spacingAndGlyphs">Type : Vibration</text>
<text x="802" y="1005" class="s b" textLength="77" lengthAdjust="spacingAndGlyphs">Line / Asset</text>
<text x="802" y="1032" class="s" textLength="311" lengthAdjust="spacingAndGlyphs">High pressure at 500PCI Possible fault / Copy TBD</text>
<text x="803" y="1060" class="s" textLength="53" lengthAdjust="spacingAndGlyphs">Severity:</text>
<text x="860" y="1060" class="s b" textLength="35" lengthAdjust="spacingAndGlyphs">Major</text>
<text x="861" y="1060" class="s b" textLength="48" lengthAdjust="spacingAndGlyphs">Critical</text>
<text x="932" y="1060" class="s" textLength="34" lengthAdjust="spacingAndGlyphs">Type:</text>
<text x="971" y="1060" class="s b" textLength="102" lengthAdjust="spacingAndGlyphs">Type: Vibration</text>
<text x="802" y="1094" class="s b" textLength="77" lengthAdjust="spacingAndGlyphs">Line / Asset</text>
<text x="802" y="1121" class="s" textLength="311" lengthAdjust="spacingAndGlyphs">High pressure at 500PCI Possible fault / Copy TBD</text>
<g fill="#4a4c6c"><rect x="1294" y="865" width="62" height="18" rx="2"/><rect x="1294" y="955" width="62" height="18" rx="2"/><rect x="1294" y="1044" width="62" height="18" rx="2"/><rect x="1294" y="1133" width="62" height="18" rx="2"/></g>
<g font-size="13"><text x="1311" y="878" font-size="13" textLength="28" lengthAdjust="spacingAndGlyphs" style="fill:#a5a7b8">Open</text><text x="1311" y="968" font-size="13" textLength="28" lengthAdjust="spacingAndGlyphs" style="fill:#a5a7b8">Open</text><text x="1311" y="1057" font-size="13" textLength="28" lengthAdjust="spacingAndGlyphs" style="fill:#a5a7b8">Open</text><text x="1311" y="1146" font-size="13" textLength="28" lengthAdjust="spacingAndGlyphs" style="fill:#a5a7b8">Open</text></g>
<g class="dv"><circle cx="1379" cy="863" r="2.800"/><circle cx="1379" cy="872" r="2.800"/><circle cx="1379" cy="880" r="2.800"/><circle cx="1379" cy="953" r="2.800"/><circle cx="1379" cy="962" r="2.800"/><circle cx="1379" cy="970" r="2.800"/><circle cx="1379" cy="1042" r="2.800"/><circle cx="1379" cy="1051" r="2.800"/><circle cx="1379" cy="1059" r="2.800"/><circle cx="1379" cy="1132" r="2.800"/><circle cx="1379" cy="1141" r="2.800"/></g>
</g>
<!-- Dropdown -->
<rect x="800.500" y="794.500" width="165" height="177" rx="3" class="c" stroke="#3e4060"/>
<rect x="801" y="887" width="164" height="36" fill="#33364f"/>
<text x="812" y="825.500" class="m" textLength="59" lengthAdjust="spacingAndGlyphs">Types: All</text>
<text x="812" y="867" class="m" textLength="57" lengthAdjust="spacingAndGlyphs">Vibration</text>
<text x="812" y="910" class="m" textLength="56" lengthAdjust="spacingAndGlyphs">Pressure</text>
<text x="812" y="953" class="m" textLength="83" lengthAdjust="spacingAndGlyphs">Temperature</text>
</svg>
</body></html>
